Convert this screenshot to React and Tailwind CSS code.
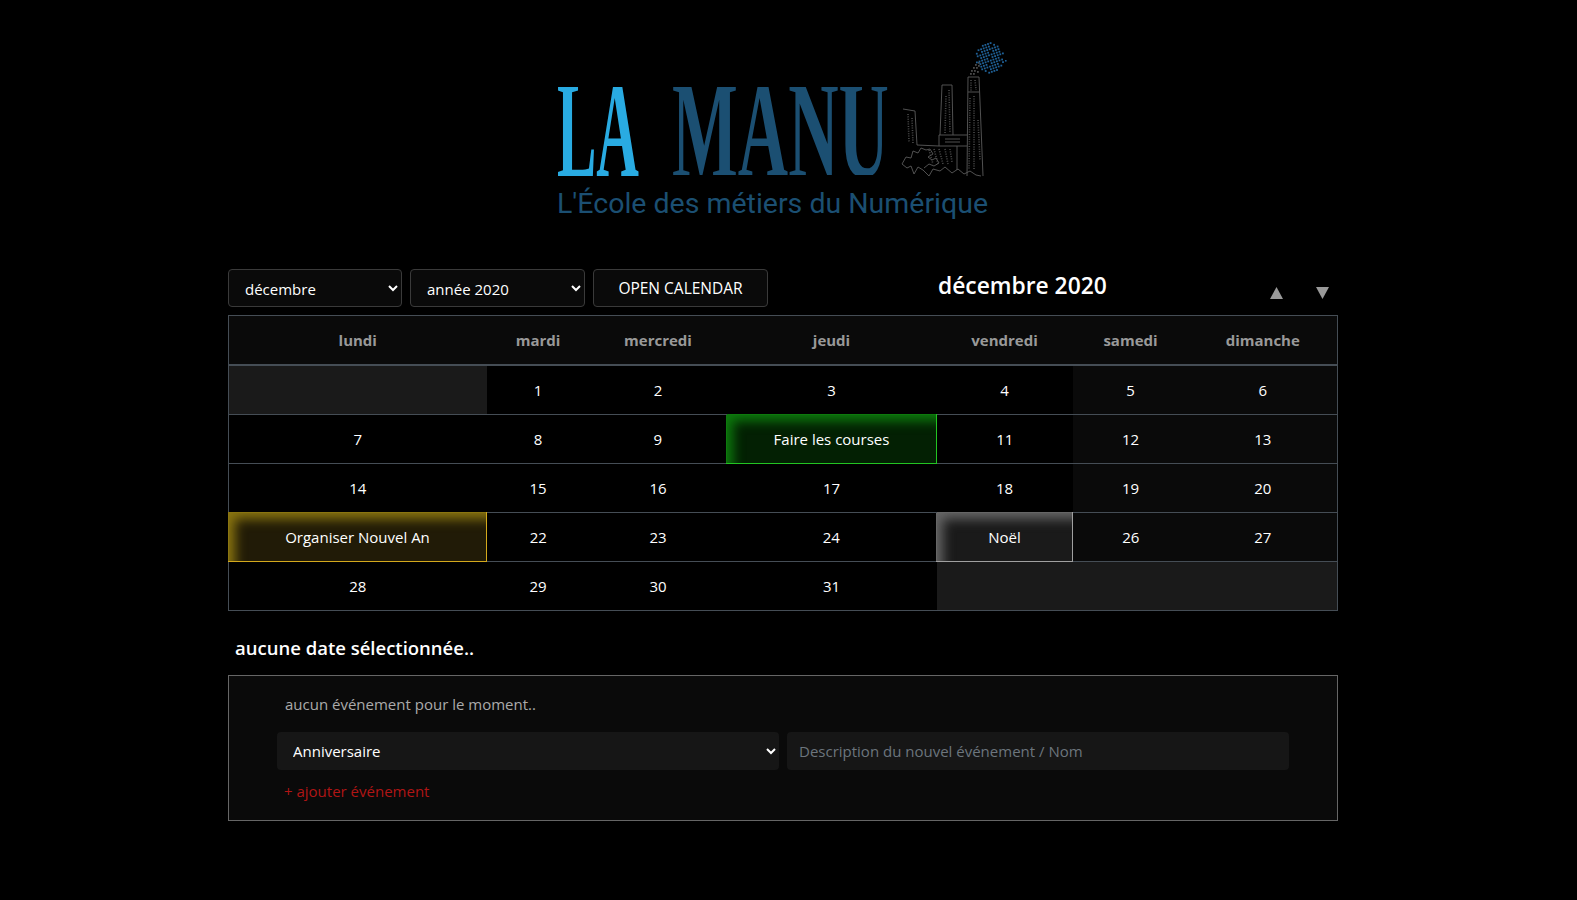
import React from "react";

const DAYS = ["lundi", "mardi", "mercredi", "jeudi", "vendredi", "samedi", "dimanche"];

const WEEKS = [
  [null, 1, 2, 3, 4, 5, 6],
  [7, 8, 9, "Faire les courses", 11, 12, 13],
  [14, 15, 16, 17, 18, 19, 20],
  ["Organiser Nouvel An", 22, 23, 24, "Noël", 26, 27],
  [28, 29, 30, 31, null, null, null],
];

const EVENT_STYLES = {
  "Faire les courses":
    "bg-[#032003] shadow-[inset_14px_14px_12px_-8px_#0d7a0d] border-t-[#0d7a0d] border-l-[#0d7a0d] border-r-[#22c522] border-b-[#22c522]",
  "Organiser Nouvel An":
    "bg-[#211b07] shadow-[inset_14px_14px_12px_-8px_#8a7510] border-t-[#8a7510] border-l-[#8a7510] border-r-[#d4a91c] border-b-[#d4a91c]",
  "Noël":
    "bg-[#1a1a1a] shadow-[inset_14px_14px_12px_-8px_#666666] border-t-[#666666] border-l-[#666666] border-r-[#a0a0a0] border-b-[#a0a0a0]",
};

// smoke above the chimney: a tilted grid of small squares
const SMOKE = [];
for (let r = -8; r <= 8; r++) {
  for (let c = -8; c <= 8; c++) {
    const x = 449 + c * 2.6 + r * 0.9;
    const y = 27 + r * 2.6 - c * 0.9;
    const d = Math.hypot((x - 449) / 14, (y - 27) / 15);
    if (d < 1 && (r * 7 + c * 5 + 90) % 9 !== 0) SMOKE.push([x, y]);
  }
}
const TAIL = [[430, 43], [433, 43], [431, 40], [434, 40], [437, 41], [433, 37], [436, 37], [435, 34], [438, 35], [438, 32]];

function Logo() {
  return (
    <svg viewBox="0 0 486 200" className="w-[486px] h-[200px] block">
      {/* trims the hairline serifs so the letters read as the logo's flared sans */}
      <clipPath id="caps">
        <rect x="0" y="57" width="486" height="88" />
      </clipPath>
      <clipPath id="capsLa">
        <rect x="0" y="57" width="486" height="89" />
      </clipPath>
      <g clipPath="url(#capsLa)">
        <text x="17" y="147" fontSize="140" fontWeight="700" textLength="82" lengthAdjust="spacingAndGlyphs" className="fill-[#29abe2] font-['Liberation_Serif']">LA</text>
      </g>
      <g clipPath="url(#caps)">
        <text x="132" y="147" fontSize="140" fontWeight="700" textLength="217" lengthAdjust="spacingAndGlyphs" className="fill-[#1b4f72] font-['Liberation_Serif']">MANU</text>
      </g>
      <text x="17" y="183" fontSize="28" textLength="431" lengthAdjust="spacingAndGlyphs" className="fill-[#1b4f72] font-['Roboto']">L'École des métiers du Numérique</text>

      <g fill="none" stroke="#5a5a5a" strokeWidth="0.9">
        {/* right chimney */}
        <path d="M428 47 L439 47 L443 146 M428 47 L427 146 M428 62 L439 62" />
        {/* middle chimney */}
        <path d="M402 55 L412 55 L413 105 M402 55 L400 105" />
        {/* cooling tower */}
        <path d="M363 79 L375 81 L377 115 M377 115 L399 116" />
        {/* buildings */}
        <path d="M399 105 L427 105 M399 105 L399 116 L427 116 M417 116 L417 140 M405 109 L420 109 M405 112 L420 112" />
        {/* trees and ground */}
        <path d="M362 134 L366 127 L371 128 L373 121 L378 123 L381 118 L386 120 L390 119 L393 124 L388 127 L392 130 L396 128 L399 133 L394 136 L389 134 L384 138" />
        <path d="M362 134 L367 138 L371 136 L374 144 L378 137 L383 140 M383 140 L389 146 L393 139 L400 141 L405 137 L412 143 L418 139 L424 144 L430 141 L436 145 L441 146" />
      </g>
      <g fill="none" stroke="#4a4a4a" strokeWidth="1.6" strokeDasharray="1 1.4">
        <path d="M431 50 L431 62 M435 50 L436 60 M430 68 L429 140 M434 66 L434 140 M438 90 L440 130" />
        <path d="M406 66 L405 103 M409 60 L410 103" />
        <path d="M368 84 L369 112 M372 88 L373 114" />
        <path d="M389 120 L393 134 M394 119 L398 134 M399 119 L403 134 M405 119 L408 134 M410 119 L412 132" />
      </g>
      {TAIL.map(([x, y], i) => (
        <rect key={i} x={x} y={y} width="1.8" height="1.8" className="fill-[#4a4a4a]" />
      ))}
      {SMOKE.map(([x, y], i) => (
        <rect key={i} x={x} y={y} width="1.8" height="1.8" className="fill-[#1f6096]" />
      ))}
      <rect x="465" y="30" width="1.6" height="1.6" className="fill-[#1f6096]" />
    </svg>
  );
}

function DayCell({ value, col }) {
  const weekend = col >= 5;
  const base = "h-[49px] p-0 text-center align-middle border-t border-[#454d55] text-white";

  if (value === null) {
    return <td className={`${base} bg-[#1a1a1a]`}></td>;
  }
  if (EVENT_STYLES[value]) {
    return <td className={`h-[49px] p-0 text-center align-middle border text-white ${EVENT_STYLES[value]}`}>{value}</td>;
  }
  return <td className={`${base} ${weekend ? "bg-[#0a0a0a]" : "bg-black"}`}>{value}</td>;
}

export default function App() {
  return (
    <div className="min-h-[900px] bg-black pr-[11px] text-[15px] text-white font-['Open_Sans',sans-serif]">
      <div className="mx-auto w-[1110px]">
        {/* Logo */}
        <div className="flex justify-center pt-[30px]">
          <Logo />
        </div>

        {/* Toolbar */}
        <div className="flex items-center mt-[39px] h-[38px]">
          <select className="w-[174px] h-[38px] pl-3 pr-1 pt-[1px] rounded border border-[#3a3a3a] bg-[#0a0a0a] text-white [color-scheme:dark]">
            <option>décembre</option>
          </select>
          <select className="w-[175px] h-[38px] ml-2 pl-3 pr-1 pt-[1px] rounded border border-[#3a3a3a] bg-[#0a0a0a] text-white [color-scheme:dark]">
            <option>année 2020</option>
          </select>
          <button className="w-[175px] h-[38px] ml-2 pt-[1px] rounded border border-[#3a3a3a] bg-[#0a0a0a] text-white text-[15.5px]">OPEN CALENDAR</button>
          <h3 className="ml-[170px] text-[22.8px] font-semibold leading-none -mt-[3px]">décembre 2020</h3>
          <svg viewBox="0 0 13 12" className="w-[13px] h-[12px] ml-auto mt-[10px]">
            <polygon points="6.5,0 13,12 0,12" className="fill-[#999]" />
          </svg>
          <svg viewBox="0 0 13 12" className="w-[13px] h-[12px] ml-[33px] mr-[9px] mt-[10px]">
            <polygon points="0,0 13,0 6.5,12" className="fill-[#999]" />
          </svg>
        </div>

        {/* Calendar */}
        <table className="mt-[8px] w-[1109px] table-fixed border-collapse border border-[#454d55]">
          <colgroup>
            <col className="w-[258px]" />
            <col className="w-[103px]" />
            <col className="w-[137px]" />
            <col className="w-[210px]" />
            <col className="w-[136px]" />
            <col className="w-[116px]" />
            <col className="w-[149px]" />
          </colgroup>
          <thead>
            <tr>
              {DAYS.map((d) => (
                <th key={d} className="h-[49px] p-0 bg-[#0a0a0a] text-[#999] font-bold text-center align-middle border-b-2 border-[#454d55]">
                  {d}
                </th>
              ))}
            </tr>
          </thead>
          <tbody>
            {WEEKS.map((week, i) => (
              <tr key={i} className={i === 0 ? "h-[50px]" : ""}>
                {week.map((value, col) => (
                  <DayCell key={col} value={value} col={col} />
                ))}
              </tr>
            ))}
          </tbody>
        </table>

        {/* Selected day */}
        <h4 className="mt-[23px] ml-[7px] text-[18.5px] font-semibold leading-[28px]">aucune date sélectionnée..</h4>

        <div className="mt-[13px] h-[146px] border border-[#666] bg-[#0a0a0a] pl-[48px] pr-[48px] pt-[16px]">
          <p className="pl-[8px] leading-[24px] text-[#aaa]">aucun événement pour le moment..</p>
          <div className="grid grid-cols-2 gap-2 mt-[16px]">
            <select className="w-full h-[38px] pl-[12px] pr-1 rounded bg-[#161616] text-white [color-scheme:dark]">
              <option>Anniversaire</option>
            </select>
            <input
              type="text"
              placeholder="Description du nouvel événement / Nom"
              className="w-full h-[38px] px-3 rounded bg-[#161616] text-white placeholder:text-[#6c757d]"
            />
          </div>
          <a className="block mt-[9px] pl-[7px] leading-[24px] text-[#b01515]">+ ajouter événement</a>
        </div>
      </div>
    </div>
  );
}
